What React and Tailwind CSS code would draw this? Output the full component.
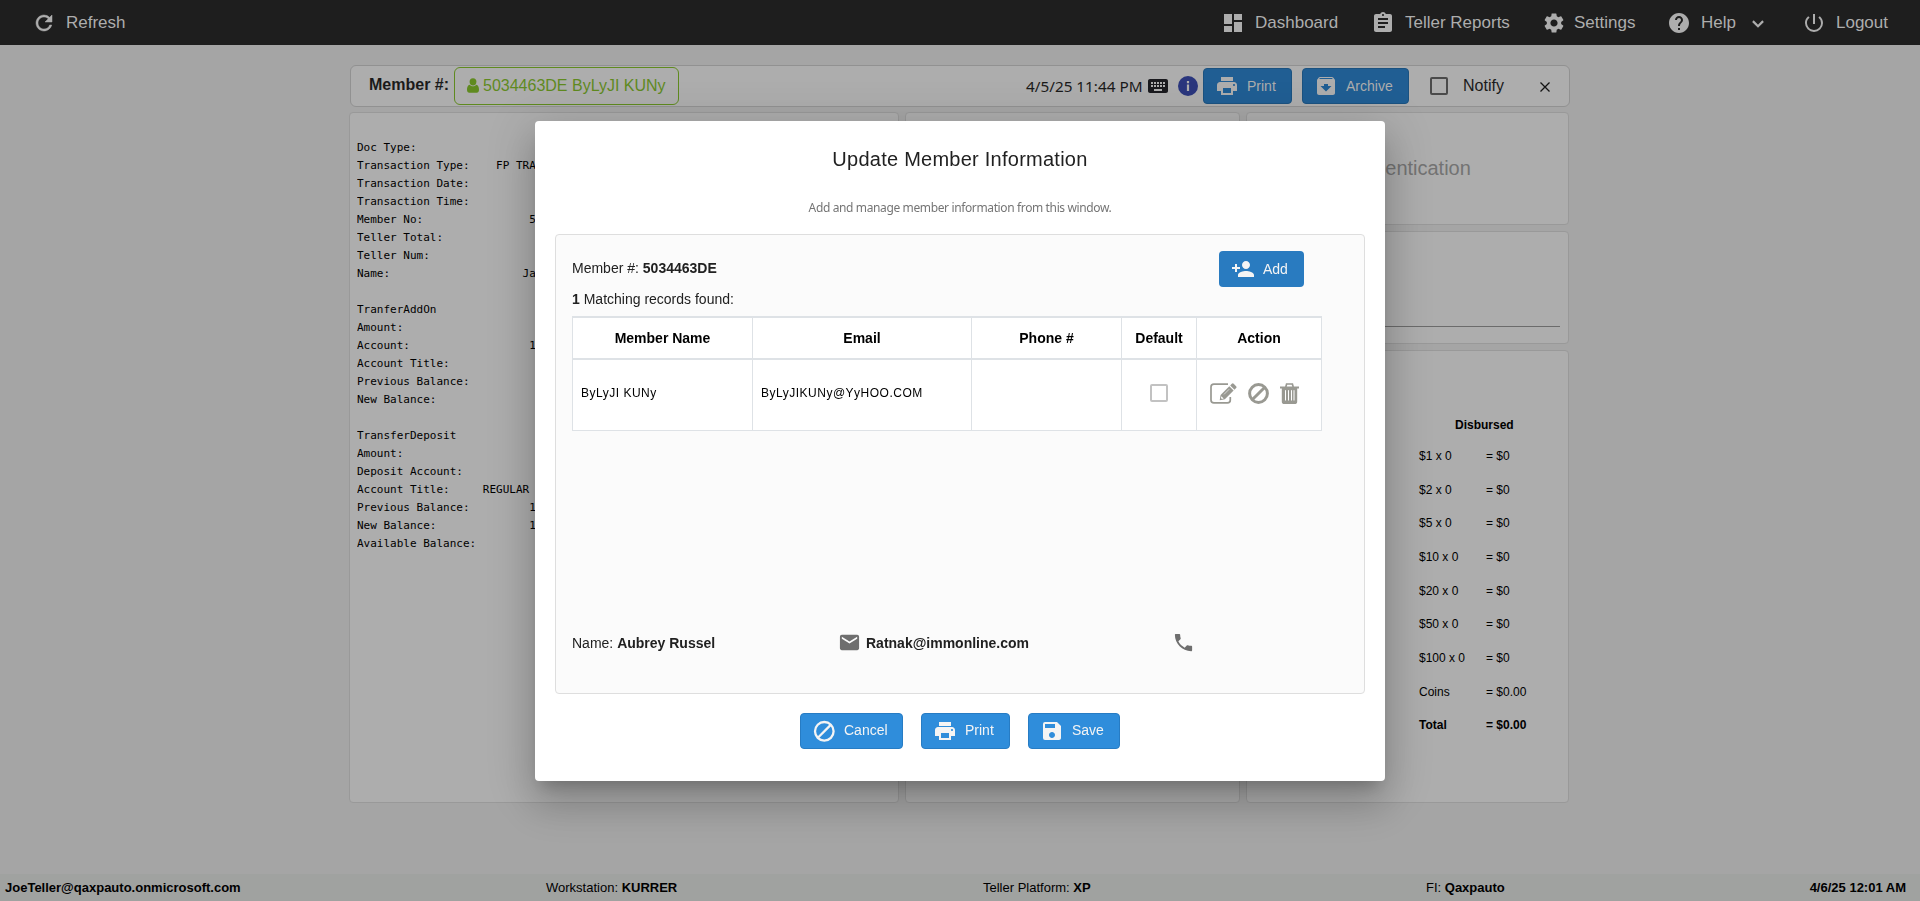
import React from "react";
import {
  MdDashboard, MdAssignment, MdSettings, MdHelp,
  MdPowerSettingsNew, MdKeyboard, MdPrint, MdArchive, MdPersonAdd,
  MdEmail, MdPhone, MdSave,
} from "react-icons/md";

const doc = [
  "Doc Type:",
  "Transaction Type:    FP TRA",
  "Transaction Date:",
  "Transaction Time:",
  "Member No:                5",
  "Teller Total:",
  "Teller Num:",
  "Name:                    Ja",
  "",
  "TranferAddOn",
  "Amount:",
  "Account:                  1",
  "Account Title:",
  "Previous Balance:",
  "New Balance:",
  "",
  "TransferDeposit",
  "Amount:",
  "Deposit Account:",
  "Account Title:     REGULAR",
  "Previous Balance:         1",
  "New Balance:              1",
  "Available Balance:",
];

const cash = [
  ["$1 x 0", "= $0"],
  ["$2 x 0", "= $0"],
  ["$5 x 0", "= $0"],
  ["$10 x 0", "= $0"],
  ["$20 x 0", "= $0"],
  ["$50 x 0", "= $0"],
  ["$100 x 0", "= $0"],
  ["Coins", "= $0.00"],
];

function NavItem({ icon: Icon, label, className, children }) {
  return (
    <div className={`flex items-center whitespace-nowrap ${className}`}>
      <Icon className="size-6 shrink-0" />
      <span>{label}</span>
      {children}
    </div>
  );
}

function RefreshIcon() {
  return (
    <svg viewBox="0 0 24 24" className="size-6 shrink-0" fill="currentColor" stroke="currentColor" strokeWidth="0.5">
      <path d="M17.650 6.350A7.958 7.958 0 0 0 12 4c-4.420 0-7.990 3.580-7.990 8s3.570 8 7.990 8c3.730 0 6.840-2.550 7.730-6h-2.080A5.990 5.990 0 0 1 12 18c-3.310 0-6-2.690-6-6s2.690-6 6-6c1.660 0 3.140.690 4.220 1.780L13 11h7V4l-2.350 2.350z" />
    </svg>
  );
}

function UserIcon() {
  return (
    <svg viewBox="0 0 12 14" preserveAspectRatio="none" className="mb-px w-3 h-[15px]" fill="currentColor">
      <circle cx="6" cy="3.6" r="3.4" />
      <path d="M2.8 6.2C4.6 8.2 7.4 8.2 9.2 6.2 11.3 6.5 12 8.5 12 11c0 1.7-.9 2.8-2.3 2.8H2.3C.9 13.8 0 12.7 0 11c0-2.500.7-4.500 2.800-4.800z" />
    </svg>
  );
}

function BlockIcon() {
  return (
    <svg viewBox="0 0 24 24" className="size-6" fill="none" stroke="currentColor" strokeWidth="2.3">
      <circle cx="12.300" cy="12.300" r="9.300" />
      <path d="M5.900 18.700 18.700 5.900" />
    </svg>
  );
}

function EditIcon() {
  return (
    <svg viewBox="0 0 27 21" className="w-[27px] h-[21px]" fill="none">
      <path d="M18 1.100H3.900A2.900 2.900 0 0 0 1 4v13a2.900 2.900 0 0 0 2.900 2.900h13.500a2.900 2.900 0 0 0 2.900-2.900v-3" stroke="currentColor" strokeWidth="1.700" />
      <path d="M9.700 17.200l.900-5.200L19.300 3.300l4.300 4.300-8.700 8.700z" fill="currentColor" />
      <path d="M20.200 2.400 21.800.800q.900-.900 1.900 0l2.400 2.400q.900.900 0 1.900l-1.600 1.600z" fill="currentColor" />
      <path d="M11.300 13.200l2.400 2.400-1.800.4-.900-.900z" fill="#fff" />
      <path d="M14 11.400l5.200-5.200" stroke="#fff" strokeWidth=".6" />
    </svg>
  );
}

function BanIcon() {
  return (
    <svg viewBox="0 0 21 21" className="size-[21px]" fill="none" stroke="currentColor" strokeWidth="3">
      <circle cx="10.500" cy="10.500" r="8.900" />
      <path d="M4.200 16.800 16.800 4.200" />
    </svg>
  );
}

function TrashIcon() {
  return (
    <svg viewBox="0 0 19 21" className="w-[19px] h-[21px]" fill="none">
      <path d="M5.800 3.900 6.600 1h5.800l.800 2.900" stroke="currentColor" strokeWidth="1.700" />
      <path d="M0 3.500h19v2H0z" fill="currentColor" />
      <path d="M1.800 5h15.400v13.200A2.700 2.700 0 0 1 14.500 21h-10a2.700 2.700 0 0 1-2.700-2.800z" fill="currentColor" />
      <path d="M5.500 7.200v10.300M8.500 7.200v10.300M11.500 7.200v10.300M14 7.200v10.300" stroke="#fff" strokeWidth="1" />
    </svg>
  );
}

function DimButton({ icon: Icon, label, className }) {
  return (
    <button className={`flex h-9 items-center gap-[8px] rounded border border-[#1b5280] bg-[#205e93] pl-[11px] text-sm text-[#adadad] ${className}`}>
      <Icon className="size-6" />
      {label}
    </button>
  );
}

function Button({ icon: Icon, label, className }) {
  return (
    <button className={`flex h-9 items-center gap-[8px] rounded border border-[#277cc4] bg-[#2f8ddb] pl-[11px] text-sm text-[#f4f4f4] ${className}`}>
      <Icon className="size-6" />
      <span className="mb-px">{label}</span>
    </button>
  );
}

const panel = "rounded border border-[#999999] bg-[#adadad]";

export default function App() {
  return (
    <div className="flex h-[901px] w-[1920px] flex-col overflow-hidden bg-[#a5a5a5] font-['Liberation_Sans',Arial,sans-serif] text-black">
      <nav className="flex h-[45px] shrink-0 items-center justify-between bg-[#1e1e1e] pl-8 text-[17px] text-[#adadad]">
        <NavItem icon={RefreshIcon} label="Refresh" className="gap-[10px]" />
        <div className="flex">
          <NavItem icon={MdDashboard} label="Dashboard" className="w-[150px] gap-[10px]" />
          <NavItem icon={MdAssignment} label="Teller Reports" className="w-[171px] gap-[10px]" />
          <NavItem icon={MdSettings} label="Settings" className="w-[125px] gap-[8px]" />
          <NavItem icon={MdHelp} label="Help" className="w-[135px] gap-[10px]">
            <svg viewBox="0 0 12 8" className="ml-[6px] mt-[2px] h-2 w-3" fill="none" stroke="currentColor" strokeWidth="2.2">
              <path d="M.9 1.100 6 6.200l5.100-5.100" />
            </svg>
          </NavItem>
          <NavItem icon={MdPowerSettingsNew} label="Logout" className="w-[118px] gap-[10px]" />
        </div>
      </nav>

      <main className="flex grow flex-col pl-[349px] pt-5">
        <header className="ml-px flex h-[42px] w-[1220px] items-center rounded-md border border-[#919191] bg-[#adadad] pl-[18px]">
          <span className="mb-[2px] w-[85px] whitespace-nowrap font-bold text-[#1a1a1a]">Member #:</span>
          <div className="flex h-[38px] w-[225px] items-center gap-1 whitespace-nowrap rounded-md border border-[#5f8a1f] pl-3 text-[#5f8a1f]">
            <UserIcon />
            <span>5034463DE ByLyJI KUNy</span>
          </div>
          <span className="ml-[347px] w-[120px] whitespace-nowrap pt-px font-['Noto_Sans',sans-serif] text-[15.300px] text-[#1a1a1a]">4/5/25 11:44 PM</span>
          <MdKeyboard className="mb-px size-6 text-[#1a1a1e]" />
          <svg viewBox="0 0 20 20" className="ml-2 mb-px size-5">
            <circle cx="10" cy="10" r="10" fill="#2a367d" />
            <path d="M8.900 5h2.200v2.200H8.900zM8.900 8.500h2.200V15H8.900z" fill="#adadad" />
          </svg>
          <DimButton icon={MdPrint} label="Print" className="ml-[5px] w-[89px]" />
          <DimButton icon={MdArchive} label="Archive" className="ml-[10px] w-[107px]" />
          <span className="ml-[21px] size-[18px] rounded-[2px] border-2 border-[#4a4a4a]" />
          <span className="ml-[15px] text-[#1a1a1a]">Notify</span>
          <svg viewBox="0 0 10 10" className="ml-[36px] mt-[2px] size-[10px]" stroke="#141414" strokeWidth="1.300">
            <path d="M.5.5l9 9M9.500.5l-9 9" />
          </svg>
        </header>

        <div className="mt-[5px] flex gap-1.5">
          <section className={`h-[691px] w-[550px] ${panel}`}>
            <pre className="mt-[26px] ml-[7px] w-[178px] overflow-hidden font-['DejaVu_Sans_Mono',monospace] text-[11px] leading-[18px]">{doc.join("\n")}</pre>
          </section>
          <section className={`h-[691px] w-[335px] ${panel}`} />
          <div className="flex h-[691px] w-[323px] flex-col gap-1.5">
            <section className={`flex h-[113px] items-center justify-center pb-0.5 text-xl text-[#737373] ${panel}`}>Authentication</section>
            <section className={`h-[113px] px-2 pt-[94px] ${panel}`}>
              <div className="h-px bg-[#6b6b6b]" />
            </section>
            <section className={`grow pt-[65px] text-xs ${panel}`}>
              <div className="ml-[208px] h-[23px] leading-[18px] font-bold">Disbursed</div>
              <div className="ml-[172px] w-[140px]">
                {cash.map(([a, b]) => (
                  <div key={a} className="flex h-[33.700px] items-center">
                    <span className="w-[67px]">{a}</span>
                    <span>{b}</span>
                  </div>
                ))}
                <div className="flex h-[33.700px] items-center font-bold">
                  <span className="w-[67px]">Total</span>
                  <span>= $0.00</span>
                </div>
              </div>
            </section>
          </div>
        </div>
      </main>

      <footer className="flex h-[27px] shrink-0 items-center bg-[#a0a2a0] pl-[5px] text-[13px] whitespace-nowrap">
        <b className="w-[541px]">JoeTeller@qaxpauto.onmicrosoft.com</b>
        <span className="w-[437px]">Workstation: <b>KURRER</b></span>
        <span className="w-[443px]">Teller Platform: <b>XP</b></span>
        <span className="grow">FI: <b>Qaxpauto</b></span>
        <b className="pr-[14px]">4/6/25 12:01 AM</b>
      </footer>

      <div className="fixed inset-0 flex items-center justify-center">
        <div className="flex h-[660px] w-[850px] flex-col items-center rounded bg-white px-5 shadow-[0_11px_15px_-7px_rgba(0,0,0,0.2),0_24px_38px_3px_rgba(0,0,0,0.14),0_9px_46px_8px_rgba(0,0,0,0.12)]">
          <h1 className="mt-[24px] text-xl leading-7 tracking-[0.25px] text-[#212121]">Update Member Information</h1>
          <p className="mt-[26px] font-['Noto_Sans',sans-serif] text-xs leading-[18px] tracking-[-0.370px] text-[#757575]">Add and manage member information from this window.</p>
          <section className="mt-[17px] h-[460px] w-[810px] rounded border border-[#dedede] bg-[#fbfbfb] pl-4 text-sm text-[#212121]">
            <div className="mt-4 flex h-9 w-[732px] items-center justify-between">
              <span className="mb-0.5">Member #: <b>5034463DE</b></span>
              <button className="flex h-9 w-[85px] items-center gap-[8px] rounded bg-[#297bc0] pl-3 text-[#f4f4f4]">
                <MdPersonAdd className="size-6" />
                Add
              </button>
            </div>
            <div className="mt-[2px] leading-5"><b>1</b> Matching records found:</div>
            <table className="mt-[7px] w-[750px] table-fixed border-collapse border border-[#dee2e6] bg-white text-black">
              <colgroup>
                <col className="w-[180px]" />
                <col className="w-[219px]" />
                <col className="w-[150px]" />
                <col className="w-[75px]" />
                <col className="w-[125px]" />
              </colgroup>
              <thead>
                <tr className="h-[42px]">
                  {["Member Name", "Email", "Phone #", "Default", "Action"].map((h) => (
                    <th key={h} className="border border-y-2 border-[#dee2e6] font-bold">{h}</th>
                  ))}
                </tr>
              </thead>
              <tbody>
                <tr className="h-[72px]">
                  <td className="border border-[#dee2e6] pb-1 pl-2 text-xs tracking-[0.5px]">ByLyJI KUNy</td>
                  <td className="border border-[#dee2e6] pb-1 pl-2 text-xs tracking-[0.5px]">ByLyJIKUNy@YyHOO.COM</td>
                  <td className="border border-[#dee2e6]" />
                  <td className="border border-[#dee2e6]">
                    <div className="mx-auto mb-[3px] size-[18px] rounded-[2px] border-2 border-[#c2c2c2]" />
                  </td>
                  <td className="border border-[#dee2e6]">
                    <div className="mb-[3px] flex items-center pl-[13px] text-[#999992]">
                      <EditIcon />
                      <span className="ml-[11px]"><BanIcon /></span>
                      <span className="ml-[11px]"><TrashIcon /></span>
                    </div>
                  </td>
                </tr>
              </tbody>
            </table>
            <div className="mt-[200px] flex h-6 items-center">
              <span className="w-[266px]">Name: <b>Aubrey Russel</b></span>
              <MdEmail className="mb-0.5 size-[23px] text-[#6e6e6e]" />
              <b className="ml-[5px] w-[306px]">Ratnak@immonline.com</b>
              <MdPhone className="mb-0.5 size-[23px] text-[#6e6e6e]" />
            </div>
          </section>
          <div className="mt-[19px] flex gap-[18px]">
            <Button icon={BlockIcon} label="Cancel" className="w-[103px]" />
            <Button icon={MdPrint} label="Print" className="w-[89px]" />
            <Button icon={MdSave} label="Save" className="w-[92px]" />
          </div>
        </div>
      </div>
    </div>
  );
}
